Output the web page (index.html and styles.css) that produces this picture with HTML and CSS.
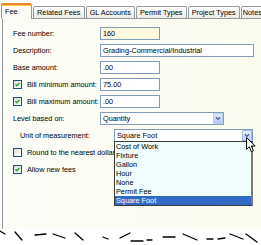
FILE: index.html
```html
<!DOCTYPE html>
<html lang="en">
<head>
    <meta charset="UTF-8">
    <meta name="viewport" content="width=device-width, initial-scale=1.0">
    <title>Fee</title>
    <link rel="stylesheet" href="styles.css">
</head>
<body>
    <div class="window">
        <div class="tabs">
            <div class="tab active">Fee</div>
            <div class="tab">Related Fees</div>
            <div class="tab">GL Accounts</div>
            <div class="tab">Permit Types</div>
            <div class="tab">Project Types</div>
            <div class="tab last">Notes</div>
        </div>

        <div class="panel">
            <div class="row">
                <label class="label">Fee number:</label>
                <input class="field short key" type="text" value="160">
            </div>
            <div class="row">
                <label class="label">Description:</label>
                <input class="field wide" type="text" value="Grading-Commercial/Industrial">
            </div>
            <div class="row">
                <label class="label">Base amount:</label>
                <input class="field short" type="text" value=".00">
            </div>
            <div class="row">
                <label class="label"><span class="check on"><svg viewBox="0 0 9 9"><polyline points="1.8,4.3 3.6,6.2 7.2,2.4"/></svg></span>Bill minimum amount:</label>
                <input class="field short" type="text" value="75.00">
            </div>
            <div class="row">
                <label class="label"><span class="check on"><svg viewBox="0 0 9 9"><polyline points="1.8,4.3 3.6,6.2 7.2,2.4"/></svg></span>Bill maximum amount:</label>
                <input class="field short" type="text" value=".00">
            </div>
            <div class="row">
                <label class="label">Level based on:</label>
                <div class="combo level">
                    <span class="value">Quantity</span>
                    <span class="arrow"><svg viewBox="0 0 9 9"><polyline points="2.2,3.2 4.5,5.5 6.8,3.2"/></svg></span>
                </div>
            </div>
            <div class="row sub">
                <label class="label">Unit of measurement:</label>
                <div class="combo unit open">
                    <span class="value">Square Foot</span>
                    <span class="arrow hot"><svg viewBox="0 0 9 9"><polyline points="2.2,3.2 4.5,5.5 6.8,3.2"/></svg></span>
                    <ul class="list">
                        <li>Cost of Work</li>
                        <li>Fixture</li>
                        <li>Gallon</li>
                        <li>Hour</li>
                        <li>None</li>
                        <li>Permit Fee</li>
                        <li class="selected">Square Foot</li>
                    </ul>
                    <svg class="pointer" viewBox="0 0 11 17" width="11" height="17">
                        <path d="M0.5 0.5 L0.5 12.5 L3.3 9.8 L5.4 14.8 L7.4 13.9 L5.3 9 L9.2 9 Z"/>
                    </svg>
                </div>
            </div>
            <div class="row">
                <label class="label long"><span class="check"></span>Round to the nearest dollar</label>
            </div>
            <div class="row">
                <label class="label long"><span class="check on"><svg viewBox="0 0 9 9"><polyline points="1.8,4.3 3.6,6.2 7.2,2.4"/></svg></span>Allow new fees</label>
            </div>
        </div>

        <!-- torn paper edge -->
        <svg class="torn" viewBox="0 0 261 15" width="261" height="15">
            <path d="M0 2 L5 5 M15 3 L22 11 M35 6 L46 5 M53 5 L65 9 M75 4 L83 11 M103 8 L108 10 M120 9 L130 4 M131 12 L143 12 M147 11 L152 11 M163 8 L175 8 M183 5 L197 11 M207 10 L213 10 M218 10 L225 9 M230 5 L243 10 M246 5 L257 13"/>
        </svg>
    </div>
</body>
</html>
```

FILE: styles.css
```css
body {
    margin: 0;
    background-color: #fff;
    font-family: "Liberation Sans", Arial, sans-serif;
    font-size: 7.3px;
    color: #000;
}

.window {
    width: 261px;
    height: 245px;
    overflow: hidden;
}

.tabs {
    display: flex;
    align-items: flex-end;
    gap: 1px;
    height: 18px;
    padding-left: 1px;
    position: relative;
    z-index: 1;
}

.tab {
    flex-shrink: 0;
    height: 11px;
    line-height: 11px;
    padding: 0 3.1px;
    border: 1px solid #919b9c;
    border-bottom: none;
    border-radius: 2px 2px 0 0;
    background: linear-gradient(#ffffff, #ecebe4);
    white-space: nowrap;
}

.tab.last {
    padding: 0 2px 0 1px;
}

.tab.active {
    width: 23px;
    height: 14px;
    line-height: 13px;
    padding: 0 3px;
    margin-bottom: -1px;
    border-top: 2px solid #e68b2c;
    background: #fcfcf4;
    box-shadow: inset 0 1px #ffc83c;
}

.panel {
    height: 211px;
    margin-left: 2px;
    padding-top: 6px;
    box-sizing: border-box;
    border-top: 1px solid #919b9c;
    border-left: 1px solid #919b9c;
    background: linear-gradient(90deg, #fdfdf8, #fbfbef);
}

.row {
    display: flex;
    align-items: center;
    height: 17px;
    padding-left: 10px;
}

.row.sub {
    padding-left: 17px;
}

.label {
    display: flex;
    align-items: center;
    width: 87px;
    flex-shrink: 0;
    white-space: nowrap;
}

.row.sub .label {
    width: 94px;
}

.label.long {
    width: auto;
}

.check {
    width: 9px;
    height: 9px;
    box-sizing: border-box;
    border: 1px solid #1c5180;
    background: linear-gradient(135deg, #dcdcd7, #ffffff);
    margin-right: 5px;
}

.check svg {
    display: block;
    width: 7px;
    height: 7px;
    fill: none;
    stroke: #21a121;
    stroke-width: 1.7;
}

.field {
    height: 13px;
    box-sizing: border-box;
    border: 1px solid #7f9db9;
    padding: 0 2px;
    margin: 0;
    font: inherit;
    color: #000;
    background: #fff;
    outline: none;
}

.field.short {
    width: 60px;
}

.field.wide {
    width: 154px;
}

.field.key {
    background: #fdf9de;
}

.combo {
    display: flex;
    align-items: center;
    height: 13px;
    box-sizing: border-box;
    border: 1px solid #7f9db9;
    background: #fff;
    padding-left: 2px;
    position: relative;
}

.combo.level {
    width: 124px;
}

.combo.unit {
    width: 139px;
}

.combo .value {
    flex: 1;
}

.arrow {
    width: 10px;
    height: 11px;
    box-sizing: border-box;
    border: 1px solid #bacbf4;
    border-radius: 1px;
    background: linear-gradient(#dfe8fe, #b6c8f6);
}

.arrow.hot {
    border-color: #9db5ee;
    background: linear-gradient(#e8effe, #c2d3fb);
}

.arrow svg {
    display: block;
    width: 8px;
    height: 9px;
    fill: none;
    stroke: #4d6185;
    stroke-width: 1.5;
}

.list {
    position: absolute;
    top: 100%;
    left: -1px;
    width: 139px;
    margin: 0;
    padding: 0;
    list-style: none;
    box-sizing: border-box;
    border: 1px solid #3c3c3c;
    border-right: 2px solid #7a7a7a;
    background: #effdfd;
    z-index: 2;
}

.list li {
    height: 9px;
    line-height: 9px;
    padding-left: 1px;
}

.list li.selected {
    background: #316ac5;
    color: #fff;
}

.pointer {
    position: absolute;
    left: 131px;
    top: 7px;
    z-index: 3;
    fill: #fff;
    stroke: #000;
    stroke-width: 1;
}

.torn {
    display: block;
    fill: none;
    stroke: #000;
    stroke-width: 1.3;
    stroke-linecap: round;
}
```
